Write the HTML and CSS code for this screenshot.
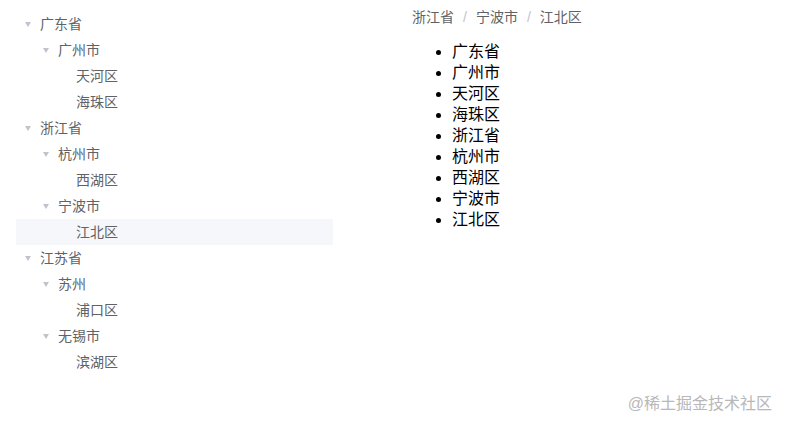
FILE: index.html
```html
<!DOCTYPE html>
<html lang="zh-CN">
<head>
    <meta charset="UTF-8">
    <meta name="viewport" content="width=device-width, initial-scale=1.0">
    <title>级联树</title>
    <link rel="stylesheet" href="styles.css">
</head>
<body>
    <div class="page">
        <div class="tree">
            <div class="tree-node level-1"><span class="caret"></span><span class="label">广东省</span></div>
            <div class="tree-node level-2"><span class="caret"></span><span class="label">广州市</span></div>
            <div class="tree-node level-3"><span class="caret leaf"></span><span class="label">天河区</span></div>
            <div class="tree-node level-3"><span class="caret leaf"></span><span class="label">海珠区</span></div>
            <div class="tree-node level-1"><span class="caret"></span><span class="label">浙江省</span></div>
            <div class="tree-node level-2"><span class="caret"></span><span class="label">杭州市</span></div>
            <div class="tree-node level-3"><span class="caret leaf"></span><span class="label">西湖区</span></div>
            <div class="tree-node level-2"><span class="caret"></span><span class="label">宁波市</span></div>
            <div class="tree-node level-3 is-current"><span class="caret leaf"></span><span class="label">江北区</span></div>
            <div class="tree-node level-1"><span class="caret"></span><span class="label">江苏省</span></div>
            <div class="tree-node level-2"><span class="caret"></span><span class="label">苏州</span></div>
            <div class="tree-node level-3"><span class="caret leaf"></span><span class="label">浦口区</span></div>
            <div class="tree-node level-2"><span class="caret"></span><span class="label">无锡市</span></div>
            <div class="tree-node level-3"><span class="caret leaf"></span><span class="label">滨湖区</span></div>
        </div>
        <div class="result">
            <div class="breadcrumb">
                <span class="crumb">浙江省</span><span class="sep">/</span><span class="crumb">宁波市</span><span class="sep">/</span><span class="crumb">江北区</span>
            </div>
            <ul class="flat-list">
                <li>广东省</li>
                <li>广州市</li>
                <li>天河区</li>
                <li>海珠区</li>
                <li>浙江省</li>
                <li>杭州市</li>
                <li>西湖区</li>
                <li>宁波市</li>
                <li>江北区</li>
            </ul>
        </div>
    </div>
    <div class="watermark">@稀土掘金技术社区</div>
</body>
</html>
```

FILE: styles.css
```css
/* Algemeen */
body {
    margin: 0;
    font-family: "Liberation Sans", "Noto Sans CJK SC", sans-serif;
    background-color: #fff;
    color: #000;
}

.page {
    display: flex;
    padding: 10px 16px;
}

/* Boom */
.tree {
    width: 317px;
    padding-top: 1px;
    font-size: 14px;
    color: #606266;
}
.tree-node {
    display: flex;
    align-items: center;
    height: 26px;
}
.tree-node.level-2 {
    padding-left: 18px;
}
.tree-node.level-3 {
    padding-left: 36px;
}
.tree-node.is-current {
    background-color: #f5f7fa;
}
.caret {
    width: 24px;
    height: 26px;
    display: flex;
    align-items: center;
    justify-content: center;
}
.caret::before {
    content: "";
    border-left: 3.5px solid transparent;
    border-right: 3.5px solid transparent;
    border-top: 5px solid #c0c4cc;
    margin-top: 1px;
}
.caret.leaf::before {
    border-top-color: transparent;
}
.label {
    line-height: 26px;
}

/* Resultaat */
.result {
    margin-left: 79px;
}
.breadcrumb {
    font-size: 14px;
    line-height: 14px;
    color: #606266;
}
.sep {
    margin: 0 9px;
    color: #c0c4cc;
}
.flat-list {
    margin: 17px 0 0;
    padding-left: 40px;
    font-size: 16px;
    line-height: 21px;
}

.watermark {
    position: absolute;
    right: 14px;
    bottom: 13px;
    font-size: 16px;
    color: #b8b8b8;
}
```
